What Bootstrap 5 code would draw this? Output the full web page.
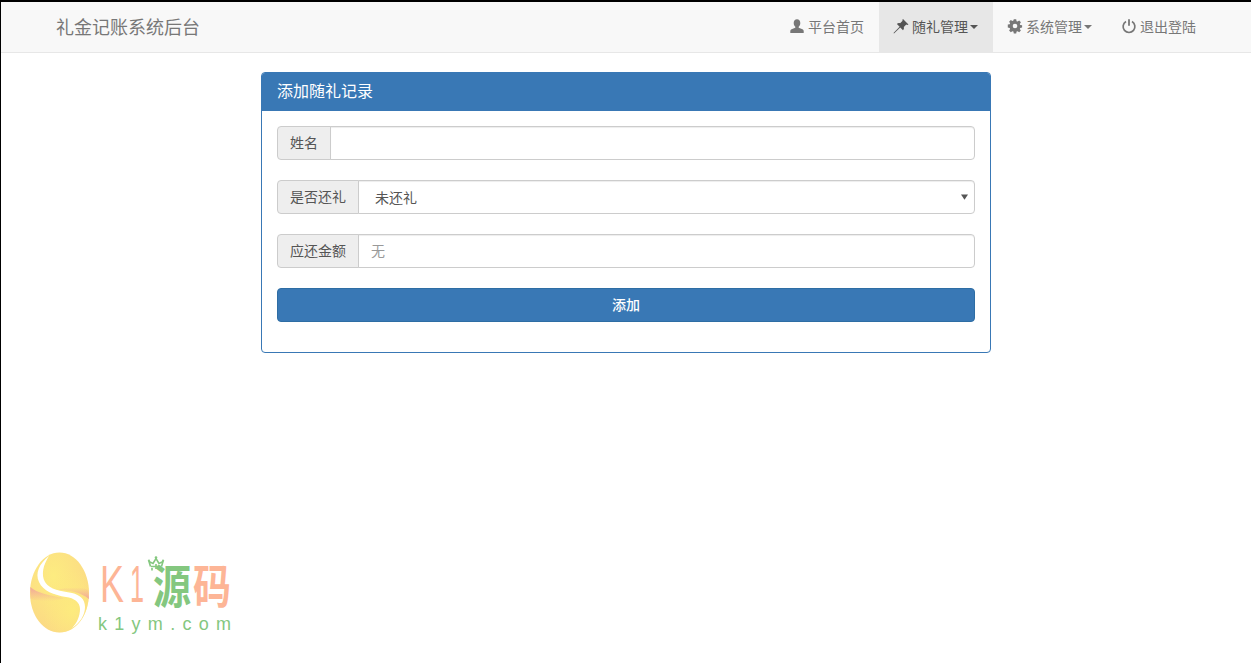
<!DOCTYPE html>
<html lang="zh-CN">
<head>
<meta charset="utf-8">
<title>添加随礼记录</title>
<link href="https://cdn.jsdelivr.net/npm/bootstrap@5.3.0/dist/css/bootstrap.min.css" rel="stylesheet">
<style>
html,body{height:100%}
body{font-family:"Noto Sans CJK SC","Liberation Sans",sans-serif;font-size:14px;line-height:20px;color:#333;background:#fff;border-top:2px solid #000;border-left:1px solid #000;overflow:hidden;position:relative}
.topbar{background:#f8f8f8;border-bottom:1px solid #e7e7e7;height:51px;padding:0 40px 0 55px}
.brandname{font-size:18px;color:#777;text-decoration:none;line-height:48px}
.topitem{color:#777;text-decoration:none;height:50px;padding:0 15px 2px;display:flex;align-items:center;gap:4px}
.topitem:hover{color:#333}
.topitem.is-open{background:#e7e7e7;color:#555}
.topitem svg{width:14px;height:14px;fill:currentColor;flex:none;overflow:visible}
.caretdown{width:0;height:0;border-top:4px solid currentColor;border-left:4px solid transparent;border-right:4px solid transparent;margin-left:-2px;margin-top:2px}
.formpanel{width:730px;margin:19px auto 0;border:1px solid #3978b5;border-radius:4px}
.formpanel-head{background:#3978b5;color:#fff;font-size:16px;height:38px;line-height:35px;padding:0 15px;border-radius:3px 3px 0 0}
.formpanel-body{padding:15px 15px 30px}
.fieldrow{margin-bottom:20px;height:34px}
.fieldrow .input-group-text{background:#eee;border:1px solid #ccc;color:#555;font-size:14px;padding:5px 12px 7px;line-height:20px;border-radius:4px 0 0 4px}
.fieldrow .form-control,.fieldrow .form-select{height:34px;border:1px solid #ccc;box-shadow:inset 0 1px 1px rgba(0,0,0,.075);font-size:14px;line-height:20px;color:#555;padding:5px 12px 7px;border-radius:0 4px 4px 0}
.fieldrow .form-select{padding:6px 24px 6px 16px;background-image:url("data:image/svg+xml,%3csvg xmlns='http://www.w3.org/2000/svg' viewBox='0 0 8 6'%3e%3cpath fill='%23555' d='M0 0h8L4 6z'/%3e%3c/svg%3e");background-size:7px 6px;background-position:right 6px center}
.fieldrow .form-control::placeholder{color:#999}
.submitbtn{background:#3978b5;border:1px solid #2e6da4;color:#fff;font-size:14px;line-height:20px;height:34px;border-radius:4px;padding:5px 12px 7px;font-weight:500}
.brandmark{position:absolute;left:27px;top:547px;width:212px;height:88px}
</style>
</head>
<body>
<nav class="topbar d-flex justify-content-between align-items-start">
  <a class="brandname" href="#">礼金记账系统后台</a>
  <div class="d-flex">
    <a class="topitem" href="#"><svg viewBox="0 0 14 14"><path d="M7 .2c2 0 3.300 1.500 3.300 3.700 0 1.600-.7 3-1.600 3.800v1l3.800 1.600c.8.4 1.200 1 1.200 1.800V14H.3v-1.900c0-.8.4-1.400 1.200-1.800l3.800-1.600v-1c-.9-.8-1.600-2.200-1.600-3.800C3.700 1.700 5 .2 7 .2z"/></svg>平台首页</a>
    <a class="topitem is-open" href="#"><svg viewBox="0 0 14 14"><path d="M9 0L14.500 5.500 13.300 6 12.300 5.600 9.800 8.100C10.200 9.500 9.900 10.600 9 11.200L6.200 8.400 0 14.500-.5 14 5.600 7.800 2.900 5C3.600 4.100 4.800 3.800 6.100 4.200L8.600 1.700 8.300.9Z"/></svg>随礼管理<span class="caretdown"></span></a>
    <a class="topitem" href="#"><svg viewBox="0 0 14 14"><path fill-rule="evenodd" d="M5.800.3h2.400l.4 1.900 1 .4 1.600-1 1.700 1.700-1.100 1.600.4 1 1.900.3v2.400l-1.900.4-.4 1 1.100 1.600-1.700 1.700-1.600-1.100-1 .4-.4 1.900H5.800l-.4-1.900-1-.4-1.600 1.100-1.700-1.700 1-1.600-.4-1-1.900-.4V5.600l1.900-.3.4-1-1-1.600 1.700-1.700 1.600 1 1-.4zM7 4.700a2.300 2.300 0 1 0 0 4.600 2.300 2.300 0 0 0 0-4.600z"/></svg>系统管理<span class="caretdown"></span></a>
    <a class="topitem" href="#"><svg viewBox="0 0 14 14"><path d="M4 2.500A5.900 5.900 0 1 0 10 2.500" fill="none" stroke="currentColor" stroke-width="1.700"/><path d="M7 .2V6.800" fill="none" stroke="currentColor" stroke-width="1.800"/></svg>退出登陆</a>
  </div>
</nav>
<main class="formpanel">
  <div class="formpanel-head">添加随礼记录</div>
  <form class="formpanel-body">
    <div class="input-group fieldrow"><span class="input-group-text">姓名</span><input class="form-control" type="text"></div>
    <div class="input-group fieldrow"><span class="input-group-text">是否还礼</span><select class="form-select"><option>未还礼</option><option>已还礼</option></select></div>
    <div class="input-group fieldrow"><span class="input-group-text">应还金额</span><input class="form-control" type="text" placeholder="无"></div>
    <button class="btn submitbtn w-100 d-block" type="button">添加</button>
  </form>
</main>
<svg class="brandmark" viewBox="0 0 212 88" aria-label="K1源码">
  <defs>
    <radialGradient id="eggfill" cx=".4" cy=".3" r=".85"><stop offset="0" stop-color="#fdec80"/><stop offset="1" stop-color="#fbd585"/></radialGradient>
    <radialGradient id="eggfilltwo" cx=".72" cy=".72" r=".5"><stop offset="0" stop-color="#fdeb7e"/><stop offset="1" stop-color="#fdeb7e" stop-opacity="0"/></radialGradient>
    <linearGradient id="pinkleft" x1="0" y1="0" x2="0" y2="1"><stop offset="0" stop-color="#f2a79a"/><stop offset="1" stop-color="#f2a79a" stop-opacity="0"/></linearGradient>
    <linearGradient id="pinkright" x1="0" y1="1" x2="0" y2="0"><stop offset="0" stop-color="#f2a79a"/><stop offset="1" stop-color="#f2a79a" stop-opacity="0"/></linearGradient>
  </defs>
  <path d="M31.500 3.500C48 3.500 61 22 61 44 61 66 48 83.500 31.500 83.500 15 83.500 2 66 2 44 2 22 15 3.500 31.500 3.500Z" fill="url(#eggfill)"/>
  <path d="M31.500 3.500C48 3.500 61 22 61 44 61 66 48 83.500 31.500 83.500 15 83.500 2 66 2 44 2 22 15 3.500 31.500 3.500Z" fill="url(#eggfilltwo)"/>
  <path d="M2.300 38C8 44 24 47 36 49 28 53 12 53 2.500 50Z" fill="url(#pinkleft)"/>
  <path d="M61 50C52 43 42 41 30 41 40 37 54 38 60.500 41Z" fill="url(#pinkright)"/>
  <path d="M21 7C11 15 7 24 11 33 15 42 26 46 38 48 46 49 52 53 52 60 52 67 49 74 44 79 52 74 57 66 57 58 57 50 52 46 44 44 33 42 22 41 17 33 13 26 15 16 21 7Z" fill="#fff"/>
  <text x="72" y="53" font-family="Liberation Sans,sans-serif" font-size="52" fill="#fdb596" textLength="24" lengthAdjust="spacingAndGlyphs">K</text>
  <text x="102" y="53" font-family="Liberation Sans,sans-serif" font-size="52" fill="#fdb596" textLength="14" lengthAdjust="spacingAndGlyphs">1</text>
  <text x="125" y="54" font-family="Noto Sans CJK SC,sans-serif" font-size="46" font-weight="700" fill="#84c77f" textLength="38" lengthAdjust="spacingAndGlyphs">源</text>
  <text x="165" y="54" font-family="Noto Sans CJK SC,sans-serif" font-size="46" font-weight="700" fill="#fdb596" textLength="38" lengthAdjust="spacingAndGlyphs">码</text>
  <g fill="none" stroke="#84c77f" stroke-width="1.600">
    <path d="M124 21.500V19M123 17.500H133M122.500 17.500L121 12.500 125 14.500 128 9.500 131 14.500 135 12.500 133.500 17.500M128 15V20"/>
  </g>
  <g fill="#84c77f"><circle cx="128" cy="8.500" r="1.300"/><circle cx="121" cy="11.500" r="1"/><circle cx="135" cy="11.500" r="1"/></g>
  <text x="70" y="81" font-family="Liberation Sans,sans-serif" font-size="18" fill="#84c77f" textLength="133">k1ym.com</text>
</svg>
<script src="https://cdn.jsdelivr.net/npm/bootstrap@5.3.0/dist/js/bootstrap.bundle.min.js"></script>
</body>
</html>
